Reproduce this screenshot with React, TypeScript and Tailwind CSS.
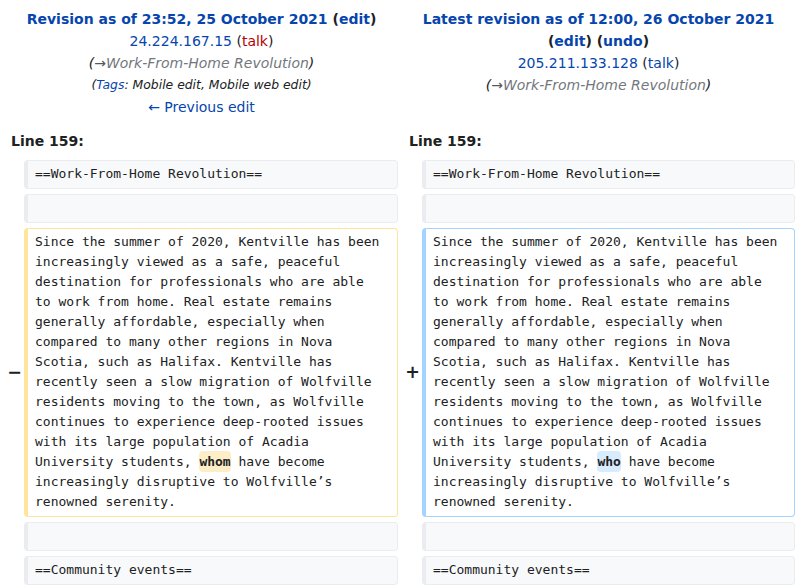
import React from "react";

const LINK = "text-[#0645ad]";

type Kind = "context" | "del" | "add";

const boxStyles: Record<Kind, string> = {
  context: "bg-[#f8f9fa] border-[#eaecf0]",
  del: "bg-white border-[#ffe49c]",
  add: "bg-white border-[#a3d3ff]",
};

function paragraph(word: string, kind: Kind) {
  const hl = kind === "del" ? "bg-[#feeec8]" : "bg-[#d8ecff]";
  const lines: React.ReactNode[] = [
    "Since the summer of 2020, Kentville has been",
    "increasingly viewed as a safe, peaceful",
    "destination for professionals who are able",
    "to work from home. Real estate remains",
    "generally affordable, especially when",
    "compared to many other regions in Nova",
    "Scotia, such as Halifax. Kentville has",
    "recently seen a slow migration of Wolfville",
    "residents moving to the town, as Wolfville",
    "continues to experience deep-rooted issues",
    "with its large population of Acadia",
    <>
      University students,{" "}
      <span className={`${hl} font-bold rounded-[4px] py-[3px]`}>{word}</span> have become
    </>,
    "increasingly disruptive to Wolfville’s",
    "renowned serenity.",
  ];
  return lines.map((l, i) => (
    <div key={i} className="whitespace-pre">
      {l}
    </div>
  ));
}

function Box({ kind, children }: { kind: Kind; children?: React.ReactNode }) {
  return (
    <div
      className={`${boxStyles[kind]} border border-solid border-l-4 rounded-[4px] pl-[7px] pr-[7px] pt-[3px] pb-[4px] text-[13px] leading-[20px] text-[#202122] font-['DejaVu_Sans_Mono',monospace]`}
    >
      {children ?? "\u00a0"}
    </div>
  );
}

function Marker({ sign }: { sign?: string }) {
  return (
    <div className="flex items-center justify-end pr-[2px] text-[17.5px] font-bold text-[#202122]">
      {sign}
    </div>
  );
}

function Row({ left, right, kindL, kindR, mL, mR }: {
  left?: React.ReactNode;
  right?: React.ReactNode;
  kindL: Kind;
  kindR: Kind;
  mL?: string;
  mR?: string;
}) {
  return (
    <div className="grid grid-cols-[24px_374px_24px_373px]">
      <Marker sign={mL} />
      <Box kind={kindL}>{left}</Box>
      <Marker sign={mR} />
      <Box kind={kindR}>{right}</Box>
    </div>
  );
}

export default function App() {
  return (
    <div className="w-[799px] h-[588px] overflow-hidden bg-white text-[14px] text-[#202122] font-['DejaVu_Sans',sans-serif]">
      <div className="flex pl-[4px] pt-[8px] gap-[4px] leading-[22px] text-center">
        <div className="w-[395px]">
          <div className="font-bold">
            <span className={LINK}>Revision as of 23:52, 25 October 2021</span> (
            <span className={LINK}>edit</span>)
          </div>
          <div>
            <span className={LINK}>24.224.167.15</span> (<span className="text-[#ba0000]">talk</span>)
          </div>
          <div className="italic">
            (<span className="text-[#54595d]">→</span>
            <span className="text-[#72777d]">Work-From-Home Revolution</span>)
          </div>
          <div className="italic text-[12.4px]">
            (<span className={LINK}>Tags</span>: Mobile edit, Mobile web edit)
          </div>
          <div>
            <span className={LINK}>← Previous edit</span>
          </div>
        </div>
        <div className="w-[391px]">
          <div className="font-bold">
            <span className={LINK}>Latest revision as of 12:00, 26 October 2021</span>
          </div>
          <div className="font-bold">
            (<span className={LINK}>edit</span>) (<span className={LINK}>undo</span>)
          </div>
          <div>
            <span className={LINK}>205.211.133.128</span> (<span className={LINK}>talk</span>)
          </div>
          <div className="italic">
            (<span className="text-[#54595d]">→</span>
            <span className="text-[#72777d]">Work-From-Home Revolution</span>)
          </div>
        </div>
      </div>

      <div className="flex mt-[12px] leading-[22px] font-bold">
        <div className="w-[398px] pl-[11px]">Line 159:</div>
        <div className="pl-[11px]">Line 159:</div>
      </div>

      <div className="flex flex-col gap-[5px] mt-[8px]">
        <Row kindL="context" kindR="context" left="==Work-From-Home Revolution==" right="==Work-From-Home Revolution==" />
        <Row kindL="context" kindR="context" />
        <Row kindL="del" kindR="add" mL="−" mR="+" left={paragraph("whom", "del")} right={paragraph("who", "add")} />
        <Row kindL="context" kindR="context" />
        <Row kindL="context" kindR="context" left="==Community events==" right="==Community events==" />
      </div>
    </div>
  );
}
